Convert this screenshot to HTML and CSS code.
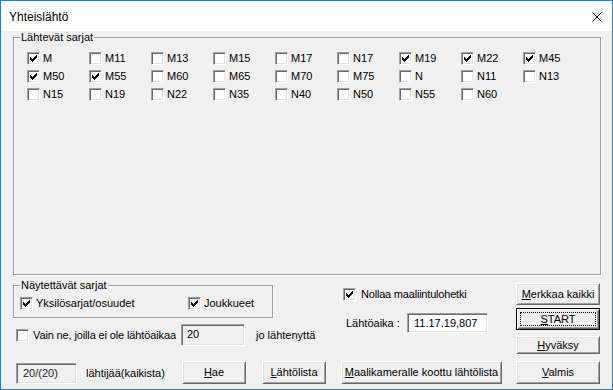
FILE: index.html
```html
<!DOCTYPE html>
<html>
<head>
<meta charset="utf-8">
<title>Yhteislähtö</title>
<link rel="stylesheet" href="styles.css">
</head>
<body>
<div class="window">
  <div class="titlebar">
    <span class="title">Yhteislähtö</span>
    <svg class="close" width="10" height="10" viewBox="0 0 10 10"><path d="M0.5 0.5L9.5 9.5M9.5 0.5L0.5 9.5" stroke="#000" stroke-width="1" fill="none"/></svg>
  </div>
  <div class="client">
    <div class="group g1">
      <span class="gtitle">Lähtevät sarjat</span>
      <div class="grid">
        <label class="chk"><span class="cb on"><svg width="7" height="7" viewBox="0 0 7 7"><path d="M0 2h1v3H0zM1 3h1v3H1zM2 4h1v3H2zM3 3h1v3H3zM4 2h1v3H4zM5 1h1v3H5zM6 0h1v3H6z"/></svg></span><span>M</span></label>
        <label class="chk"><span class="cb"></span><span>M11</span></label>
        <label class="chk"><span class="cb"></span><span>M13</span></label>
        <label class="chk"><span class="cb"></span><span>M15</span></label>
        <label class="chk"><span class="cb"></span><span>M17</span></label>
        <label class="chk"><span class="cb"></span><span>N17</span></label>
        <label class="chk"><span class="cb on"><svg width="7" height="7" viewBox="0 0 7 7"><path d="M0 2h1v3H0zM1 3h1v3H1zM2 4h1v3H2zM3 3h1v3H3zM4 2h1v3H4zM5 1h1v3H5zM6 0h1v3H6z"/></svg></span><span>M19</span></label>
        <label class="chk"><span class="cb on"><svg width="7" height="7" viewBox="0 0 7 7"><path d="M0 2h1v3H0zM1 3h1v3H1zM2 4h1v3H2zM3 3h1v3H3zM4 2h1v3H4zM5 1h1v3H5zM6 0h1v3H6z"/></svg></span><span>M22</span></label>
        <label class="chk"><span class="cb on"><svg width="7" height="7" viewBox="0 0 7 7"><path d="M0 2h1v3H0zM1 3h1v3H1zM2 4h1v3H2zM3 3h1v3H3zM4 2h1v3H4zM5 1h1v3H5zM6 0h1v3H6z"/></svg></span><span>M45</span></label>

        <label class="chk"><span class="cb on"><svg width="7" height="7" viewBox="0 0 7 7"><path d="M0 2h1v3H0zM1 3h1v3H1zM2 4h1v3H2zM3 3h1v3H3zM4 2h1v3H4zM5 1h1v3H5zM6 0h1v3H6z"/></svg></span><span>M50</span></label>
        <label class="chk"><span class="cb on"><svg width="7" height="7" viewBox="0 0 7 7"><path d="M0 2h1v3H0zM1 3h1v3H1zM2 4h1v3H2zM3 3h1v3H3zM4 2h1v3H4zM5 1h1v3H5zM6 0h1v3H6z"/></svg></span><span>M55</span></label>
        <label class="chk"><span class="cb"></span><span>M60</span></label>
        <label class="chk"><span class="cb"></span><span>M65</span></label>
        <label class="chk"><span class="cb"></span><span>M70</span></label>
        <label class="chk"><span class="cb"></span><span>M75</span></label>
        <label class="chk"><span class="cb"></span><span>N</span></label>
        <label class="chk"><span class="cb"></span><span>N11</span></label>
        <label class="chk"><span class="cb"></span><span>N13</span></label>

        <label class="chk"><span class="cb"></span><span>N15</span></label>
        <label class="chk"><span class="cb"></span><span>N19</span></label>
        <label class="chk"><span class="cb"></span><span>N22</span></label>
        <label class="chk"><span class="cb"></span><span>N35</span></label>
        <label class="chk"><span class="cb"></span><span>N40</span></label>
        <label class="chk"><span class="cb"></span><span>N50</span></label>
        <label class="chk"><span class="cb"></span><span>N55</span></label>
        <label class="chk"><span class="cb"></span><span>N60</span></label>
      </div>
    </div>

    <div class="mid">
      <div class="col-left">
        <div class="group g2">
          <span class="gtitle">Näytettävät sarjat</span>
          <div class="g2row">
            <label class="chk yks"><span class="cb on"><svg width="7" height="7" viewBox="0 0 7 7"><path d="M0 2h1v3H0zM1 3h1v3H1zM2 4h1v3H2zM3 3h1v3H3zM4 2h1v3H4zM5 1h1v3H5zM6 0h1v3H6z"/></svg></span><span>Yksilösarjat/osuudet</span></label>
            <label class="chk"><span class="cb on"><svg width="7" height="7" viewBox="0 0 7 7"><path d="M0 2h1v3H0zM1 3h1v3H1zM2 4h1v3H2zM3 3h1v3H3zM4 2h1v3H4zM5 1h1v3H5zM6 0h1v3H6z"/></svg></span><span>Joukkueet</span></label>
          </div>
        </div>
        <div class="vain">
          <label class="chk vain-chk"><span class="cb"></span><span class="vain-txt">Vain ne, joilla ei ole lähtöaikaa</span></label>
          <span class="edit ro num">20</span>
          <span class="jo">jo lähtenyttä</span>
        </div>
      </div>

      <div class="col-mid">
        <label class="chk nollaa"><span class="cb on"><svg width="7" height="7" viewBox="0 0 7 7"><path d="M0 2h1v3H0zM1 3h1v3H1zM2 4h1v3H2zM3 3h1v3H3zM4 2h1v3H4zM5 1h1v3H5zM6 0h1v3H6z"/></svg></span><span class="nollaa-txt">Nollaa maaliintulohetki</span></label>
        <div class="lahto">
          <span class="lahto-lbl">Lähtöaika :</span>
          <span class="edit time">11.17.19,807</span>
        </div>
      </div>

      <div class="col-right">
        <button class="btn merkkaa"><u>M</u>erkkaa kaikki</button>
        <button class="btn start"><u>S</u>TART</button>
        <button class="btn hyv"><u>H</u>yväksy</button>
      </div>
    </div>

    <div class="bottom">
      <span class="edit ro count">20/(20)</span>
      <span class="lahtijaa">lähtijää(kaikista)</span>
      <button class="btn hae"><u>H</u>ae</button>
      <button class="btn lista"><u>L</u>ähtölista</button>
      <button class="btn maali"><u>M</u>aalikameralle koottu lähtölista</button>
      <button class="btn valmis"><u>V</u>almis</button>
    </div>
  </div>
</div>
</body>
</html>
```

FILE: styles.css
```css
* { box-sizing: border-box; }

body {
  margin: 0;
  font-family: "Liberation Sans", Arial, sans-serif;
  font-size: 11px;
  color: #000;
  background: #fff;
}

.window {
  width: 613px;
  height: 390px;
  border: 1px solid #1883d7;
  display: flex;
  flex-direction: column;
  background: #f0f0f0;
}

.titlebar {
  height: 30px;
  flex: none;
  background: #fff;
  display: flex;
  align-items: center;
  padding-left: 8px;
}

.title {
  font-size: 12px;
  line-height: 14px;
  margin-top: 1px;
}

.close {
  margin-left: auto;
  margin-right: 10px;
  margin-top: 2px;
  display: block;
}

.client {
  flex: 1;
  padding-left: 12px;
  background: #f0f0f0;
}

/* group boxes */
.group {
  position: relative;
  border: 1px solid #a0a0a0;
  box-shadow: inset 1px 1px 0 #fff, 1px 1px 0 #fff;
}

.gtitle {
  position: absolute;
  top: -7px;
  left: 6px;
  padding: 0 1px;
  line-height: 13px;
  background: #f0f0f0;
  white-space: nowrap;
}

.g1 {
  margin-top: 6px;
  width: 588px;
  height: 238px;
}

.grid {
  display: grid;
  grid-template-columns: repeat(9, 62px);
  grid-auto-rows: 18px;
  padding: 11px 0 0 13px;
}

/* checkbox */
.chk {
  display: flex;
  align-items: center;
  gap: 3px;
  white-space: nowrap;
  line-height: 13px;
}

.cb {
  width: 13px;
  height: 13px;
  flex: none;
  background: #fff;
  border: 1px solid;
  border-color: #a0a0a0 #fff #fff #a0a0a0;
  box-shadow: inset 1px 1px 0 #696969, inset -1px -1px 0 #e3e3e3;
}

.cb svg {
  display: block;
  margin: 2px 0 0 2px;
  fill: #000;
}

/* edits */
.edit {
  display: block;
  flex: none;
  border: 1px solid;
  border-color: #a0a0a0 #fff #fff #a0a0a0;
  box-shadow: inset 1px 1px 0 #696969, inset -1px -1px 0 #e3e3e3;
  background: #fff;
  white-space: nowrap;
}

.edit.ro { background: #f0f0f0; }

/* buttons */
.btn {
  display: block;
  flex: none;
  margin: 0;
  padding: 0;
  font: inherit;
  color: #000;
  background: #f0f0f0;
  border: 1px solid;
  border-color: #fff #696969 #696969 #fff;
  box-shadow: inset 1px 1px 0 #e3e3e3, inset -1px -1px 0 #a0a0a0;
  text-align: center;
  line-height: 13px;
  position: relative;
}

.btn u { text-decoration: underline; text-underline-offset: 1px; }

/* middle section */
.mid {
  display: flex;
  align-items: flex-start;
  height: 86px;
}

.col-left {
  width: 317px;
  flex: none;
}

.g2 {
  margin-top: 10px;
  width: 260px;
  height: 33px;
}

.g2row {
  display: flex;
  padding: 11px 0 0 6px;
}

.yks { width: 168px; }

.vain {
  margin-top: 6px;
  height: 22px;
  display: flex;
  align-items: center;
}

.vain-chk {
  margin-left: 3px;
  width: 165px;
}

.vain-chk .cb { margin-right: 1px; }

.vain-txt { letter-spacing: -0.13px; }

.num {
  width: 64px;
  height: 22px;
  padding: 3px 0 0 5px;
  line-height: 13px;
}

.jo { margin-left: 11px; }

.col-mid {
  width: 173px;
  margin-left: 13px;
  flex: none;
}

.nollaa {
  margin-top: 13px;
  gap: 5px;
}

.nollaa-txt { letter-spacing: -0.2px; }

.lahto {
  margin-top: 12px;
  display: flex;
  align-items: center;
  height: 20px;
}

.lahto-lbl {
  margin-left: 3px;
  width: 61px;
}

.time {
  width: 81px;
  height: 20px;
  padding: 2px 0 0 6px;
  line-height: 14px;
}

.col-right {
  width: 84px;
  flex: none;
  display: flex;
  flex-direction: column;
}

.merkkaa { margin-top: 8px; height: 22px; }

.start {
  margin-top: 3px;
  height: 22px;
  border: 1px solid #000;
  box-shadow: inset 1px 1px 0 #fff, inset -1px -1px 0 #696969, inset 2px 2px 0 #e3e3e3, inset -2px -2px 0 #a0a0a0;
}

.start::after {
  content: "";
  position: absolute;
  left: 3px;
  right: 3px;
  top: 3px;
  bottom: 3px;
  border: 1px dotted #000;
}

.hyv { margin-top: 6px; height: 18px; }

/* bottom row */
.bottom {
  display: flex;
  align-items: flex-end;
  height: 23px;
}

.count {
  margin-left: 3px;
  width: 61px;
  height: 21px;
  padding: 3px 0 0 6px;
  line-height: 13px;
  color: #1a1a1a;
}

.lahtijaa {
  width: 96px;
  margin-left: 9px;
  align-self: center;
  padding-top: 1px;
}

.hae { width: 64px; height: 23px; }
.lista { width: 64px; height: 23px; margin-left: 16px; }
.maali { width: 161px; height: 23px; margin-left: 15px; }
.valmis { width: 84px; height: 23px; margin-left: 14px; }
```
